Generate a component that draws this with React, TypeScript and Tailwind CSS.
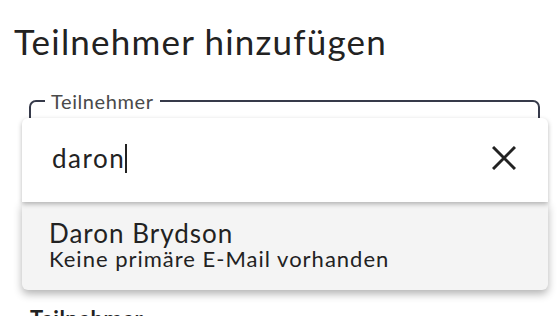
export default function App() {
  return (
    <div className="relative w-[560px] h-[316px] overflow-hidden bg-white font-['Lato',sans-serif] text-[#222]">
      <h1 className="pl-[14px] pt-[20px] text-[35px] leading-[42px] font-normal tracking-[1.2px]">Teilnehmer hinzufügen</h1>

      <fieldset className="ml-[29px] mr-[20px] mt-[29px] h-[120px] rounded-[7px] border-2 border-[#363a4a] px-[14px]">
        <legend className="px-[6px] text-[20px] leading-[20px] tracking-[0.6px] text-[#4a4a4a]">Teilnehmer</legend>
      </fieldset>

      <div className="pl-[30px] pt-[95px] text-[22px] font-bold leading-[26px] tracking-[0.5px]">Teilnehmer</div>

      <div className="absolute left-[22px] top-[118px] w-[526px]">
        <div className="relative z-10 flex h-[84px] items-center justify-between rounded-t-[6px] bg-white pb-[4px] pl-[30px] pr-[32px] shadow-[0_2px_5px_rgba(0,0,0,0.28)]">
          <div className="flex items-center text-[26px] leading-[30px] tracking-[1.5px]">
            <span>daron</span>
            <span className="h-[29px] w-[2px] bg-[#222]" />
          </div>
          <svg width="24" height="24" viewBox="0 0 24 24" className="text-[#222]">
            <path d="M1 1 L23 23 M23 1 L1 23" stroke="currentColor" strokeWidth="3" fill="none" />
          </svg>
        </div>
        <div className="flex h-[88px] flex-col rounded-b-[6px] bg-[#f4f4f4] pl-[27px] pt-[17px] shadow-[0_4px_8px_rgba(0,0,0,0.3)]">
          <div className="text-[26px] leading-[28px] tracking-[1px]">Daron Brydson</div>
          <div className="text-[22px] leading-[24px] tracking-[1px]">Keine primäre E-Mail vorhanden</div>
        </div>
      </div>
    </div>
  );
}
